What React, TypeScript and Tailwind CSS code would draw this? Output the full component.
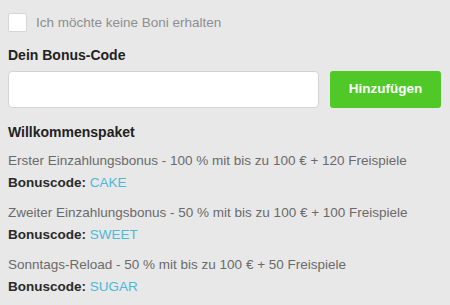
import React from "react";

const offers = [
  { text: "Erster Einzahlungsbonus - 100 % mit bis zu 100 € + 120 Freispiele", code: "CAKE" },
  { text: "Zweiter Einzahlungsbonus - 50 % mit bis zu 100 € + 100 Freispiele", code: "SWEET" },
  { text: "Sonntags-Reload - 50 % mit bis zu 100 € + 50 Freispiele", code: "SUGAR" },
];

export default function App() {
  return (
    <div className="w-[450px] h-[305px] bg-[#e8e8e8] overflow-hidden px-2 pt-[13px] font-['Liberation_Sans',Arial,sans-serif]">
      <label className="flex items-center gap-[9px] h-[19px]">
        <span className="w-[19px] h-[19px] bg-white border border-[#d6d6d6] rounded-[2px]" />
        <span className="text-[13.5px] text-[#8e8e8e] leading-[17px]">Ich möchte keine Boni erhalten</span>
      </label>
      <div className="mt-[15px] text-[14px] font-bold text-[#222] leading-[17px]">
        Dein Bonus-Code
      </div>
      <div className="mt-[7px] flex gap-[11px]">
        <div className="w-[311px] h-[37px] bg-white border border-[#d4d4d4] rounded-[4px]" />
        <button className="w-[111px] h-[37px] bg-[#4fc828] rounded-[3px] text-white text-[13.5px] font-bold">
          Hinzufügen
        </button>
      </div>
      <div className="mt-[16px] text-[14px] font-bold text-[#222] leading-[17px]">
        Willkommenspaket
      </div>
      {offers.map((o, i) => (
        <div key={o.code} className={i === 0 ? "mt-[11px]" : "mt-[13px]"}>
          <div className="text-[13.5px] text-[#6a6a6a] leading-[17px]">{o.text}</div>
          <div className="mt-[5px] text-[13.5px] leading-[17px]">
            <span className="font-bold text-[#2a2a2a]">Bonuscode:</span>{" "}
            <span className="text-[#4bb9d9]">{o.code}</span>
          </div>
        </div>
      ))}
    </div>
  );
}
